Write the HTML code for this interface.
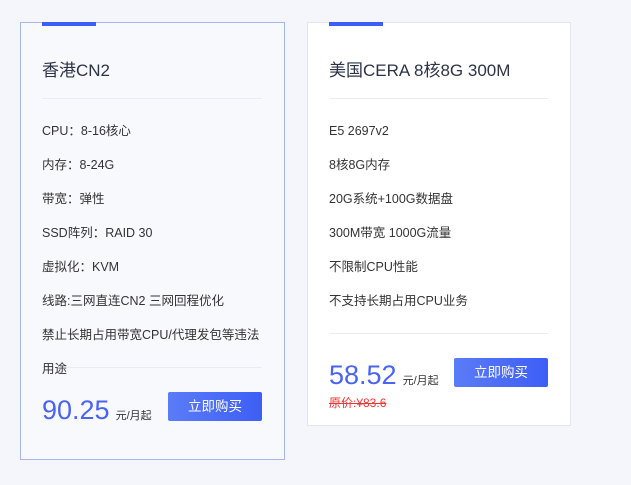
<!DOCTYPE html>
<html><head><meta charset="utf-8"><style>
*{margin:0;padding:0;box-sizing:border-box}
body{width:631px;height:485px;background:#f5f6fb;font-family:"Liberation Sans","Noto Sans CJK SC",sans-serif;color:#333;position:relative;overflow:hidden}
.card{position:absolute;top:22px}
.c1{left:20px;width:265px;height:438px;background:#f8f9fd;border:1px solid #a9b6ee}
.c2{left:307px;width:264px;height:404px;background:#fff;border:1px solid #e2e6ef}
.bar{position:absolute;top:-1px;left:21px;width:54px;height:4px;background:#3d5ef6}
.t{position:absolute;left:21px;top:37px;font-size:17px;line-height:22px;color:#2c3347;white-space:nowrap}
.hr{position:absolute;left:21px;height:1px;background:#e9ecf5}
.l{position:absolute;left:21px;font-size:12.5px;line-height:16px;color:#333;white-space:nowrap}
.p{position:absolute;left:21px;font-size:27px;line-height:32px;color:#4a63f0;white-space:nowrap}
.p small{font-size:11px;color:#333;margin-left:6px}
.btn{position:absolute;width:94px;height:29px;background:linear-gradient(90deg,#5b7cf7,#3d5ef6);color:#fff;font-size:13.5px;text-align:center;line-height:29px;border-radius:2px}
.old{position:absolute;left:21px;font-size:12px;line-height:16px;color:#e53935;text-decoration:line-through}
</style></head><body>
<div class="card c1">
<div class="bar"></div>
<div class="t">香港CN2</div>
<div class="hr" style="top:75px;width:220px"></div>
<div class="l" style="top:100px">CPU：8-16核心</div>
<div class="l" style="top:134px">内存：8-24G</div>
<div class="l" style="top:168px">带宽：弹性</div>
<div class="l" style="top:202px">SSD阵列：RAID 30</div>
<div class="l" style="top:236px">虚拟化：KVM</div>
<div class="l" style="top:270px">线路:三网直连CN2 三网回程优化</div>
<div class="l" style="top:304px">禁止长期占用带宽CPU/代理发包等违法</div>
<div class="hr" style="top:344px;width:220px"></div>
<div class="l" style="top:338px">用途</div>
<div class="p" style="top:371px">90.25<small>元/月起</small></div>
<div class="btn" style="left:147px;top:369px">立即购买</div>
</div>
<div class="card c2">
<div class="bar"></div>
<div class="t">美国CERA 8核8G 300M</div>
<div class="hr" style="top:75px;width:219px"></div>
<div class="l" style="top:100px">E5 2697v2</div>
<div class="l" style="top:134px">8核8G内存</div>
<div class="l" style="top:168px">20G系统+100G数据盘</div>
<div class="l" style="top:202px">300M带宽 1000G流量</div>
<div class="l" style="top:236px">不限制CPU性能</div>
<div class="l" style="top:270px">不支持长期占用CPU业务</div>
<div class="hr" style="top:310px;width:219px"></div>
<div class="p" style="top:336px">58.52<small>元/月起</small></div>
<div class="btn" style="left:146px;top:335px">立即购买</div>
<div class="old" style="top:372px">原价:¥83.6</div>
</div>
</body></html>
